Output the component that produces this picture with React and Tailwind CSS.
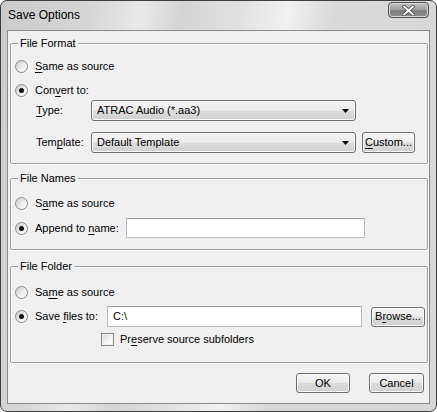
import React from "react";

// Vista-style gray glossy surface shared by push buttons and combo boxes
const gloss =
  "rounded-[3px] border border-[#707070] bg-[linear-gradient(#f5f5f5,#ececec_48%,#dcdcdc_52%,#d0d0d0)] shadow-[inset_0_0_0_1px_#fbfbfb]";

function U({ children }) {
  return <span className="underline decoration-[1px] underline-offset-[2px]">{children}</span>;
}

function Radio({ checked }) {
  return (
    <span className="mr-[7px] flex h-[13px] w-[13px] shrink-0 items-center justify-center rounded-full border border-[#8a8a8a] bg-[linear-gradient(135deg,#c8c8c8,#eeeeee_55%,#ffffff)]">
      {checked && <span className="h-[5px] w-[5px] rounded-full bg-[#111]" />}
    </span>
  );
}

function Checkbox() {
  return (
    <span className="flex h-[13px] w-[13px] shrink-0 border border-[#8a8a8a] bg-[linear-gradient(135deg,#dcdcdc,#f6f6f6_60%,#ffffff)] shadow-[inset_0_0_0_1px_#f0f0f0]" />
  );
}

function Button({ children, className = "" }) {
  return (
    <button type="button" className={`flex items-center justify-center text-[11px] leading-[13px] text-black ${gloss} ${className}`}>
      {children}
    </button>
  );
}

function Select({ value }) {
  return (
    <div className={`flex h-[21px] w-[265px] shrink-0 items-center justify-between pl-[5px] pr-[6px] ${gloss}`}>
      <span className="leading-[13px]">{value}</span>
      <svg width="7" height="4" viewBox="0 0 7 4">
        <path d="M0 0h7L3.5 4z" fill="#000" />
      </svg>
    </div>
  );
}

function TextBox({ value = "", className = "" }) {
  return (
    <div className={`flex shrink-0 items-center border border-[#bcbcbc] border-t-[#a3a3a3] bg-white pl-[5px] leading-[13px] ${className}`}>
      {value}
    </div>
  );
}

function Group({ title, className = "", children }) {
  return (
    <fieldset className={`rounded-[2px] border border-[#9e9e9e] shadow-[inset_1px_1px_0_#ffffff,1px_1px_0_#ffffff] ${className}`}>
      <legend className="ml-[7px] bg-[#f0f0f0] px-[2px] leading-[14px]">{title}</legend>
      {children}
    </fieldset>
  );
}

function RadioRow({ checked, children, className = "" }) {
  return (
    <div className={`flex h-[20px] items-center pl-[4px] ${className}`}>
      <Radio checked={checked} />
      {children}
    </div>
  );
}

export default function App() {
  return (
    <div className="min-h-screen bg-white">
      <div className="flex h-[412px] w-[437px] flex-col rounded-[7px] border border-[#3e3e3e] bg-[linear-gradient(100deg,#cbcbcb_0%,#d6d6d6_18%,#e9e9e9_28%,#d4d4d4_36%,#e2e2e2_48%,#f1f1f1_57%,#d9d9d9_66%,#d7d7d7_100%)] font-['Liberation_Sans',Arial,sans-serif] text-[11px] text-black">
        {/* title bar */}
        <div className="flex h-[29px] items-start justify-between pl-[7px] pr-[7px]">
          <span className="mt-[7px] text-[12px] leading-[14px]">Save Options</span>
          <div className="mt-[1px] flex h-[16px] w-[41px] items-center justify-center rounded-[4px] border border-[#4e4e4e] bg-[linear-gradient(#c4c4c4,#a2a2a2_45%,#7e7e7e_55%,#8e8e8e)] shadow-[inset_0_0_0_1px_#d8d8d8]">
            <svg width="13" height="11" viewBox="0 0 13 11">
              <path d="M2 1.5l9 8M11 1.5l-9 8" stroke="#3a3a3a" strokeWidth="3.4" strokeLinecap="round" />
              <path d="M2 1.5l9 8M11 1.5l-9 8" stroke="#ffffff" strokeWidth="2" strokeLinecap="round" />
            </svg>
          </div>
        </div>

        {/* client area */}
        <div className="mx-[6px] flex h-[374px] flex-col border border-[#8a8a8a] bg-[#f0f0f0] pl-[2px] pr-[1px] pt-[5px]">
          <Group title="File Format" className="pb-[10px]">
            <RadioRow className="mt-[6px]">
              <span><U>S</U>ame as source</span>
            </RadioRow>
            <RadioRow checked className="mt-[4px]">
              <span>Con<U>v</U>ert to:</span>
            </RadioRow>
            <div className="flex items-center pl-[25px]">
              <span className="w-[55px]"><U>T</U>ype:</span>
              <Select value="ATRAC Audio (*.aa3)" />
            </div>
            <div className="mt-[11px] flex items-center pl-[25px]">
              <span className="w-[55px]">Tem<U>p</U>late:</span>
              <Select value="Default Template" />
              <Button className="ml-[6px] h-[21px] w-[53px]"><U>C</U>ustom...</Button>
            </div>
          </Group>

          <Group title="File Names" className="mt-[7px] pb-[11px]">
            <RadioRow className="mt-[8px]">
              <span>S<U>a</U>me as source</span>
            </RadioRow>
            <RadioRow checked className="mt-[5px]">
              <span className="w-[91px] shrink-0">Append to <U>n</U>ame:</span>
              <TextBox className="h-[20px] w-[239px]" />
            </RadioRow>
          </Group>

          <Group title="File Folder" className="mt-[9px] pb-[15px]">
            <RadioRow className="mt-[9px]">
              <span>Sa<U>m</U>e as source</span>
            </RadioRow>
            <div className="mt-[4px] flex h-[21px] items-center pl-[4px]">
              <Radio checked />
              <span className="w-[72px] shrink-0">Save <U>f</U>iles to:</span>
              <TextBox value="C:\" className="h-[21px] w-[255px]" />
              <Button className="ml-[9px] h-[20px] w-[54px]">B<U>r</U>owse...</Button>
            </div>
            <div className="mt-[4px] flex h-[16px] items-center gap-[6px] pl-[90px]">
              <Checkbox />
              <span>Pr<U>e</U>serve source subfolders</span>
            </div>
          </Group>

          <div className="mt-[10px] flex h-[20px] justify-end gap-[19px] pr-[4px]">
            <Button className="h-[20px] w-[54px]">OK</Button>
            <Button className="h-[20px] w-[55px]">Cancel</Button>
          </div>
        </div>
      </div>
    </div>
  );
}
